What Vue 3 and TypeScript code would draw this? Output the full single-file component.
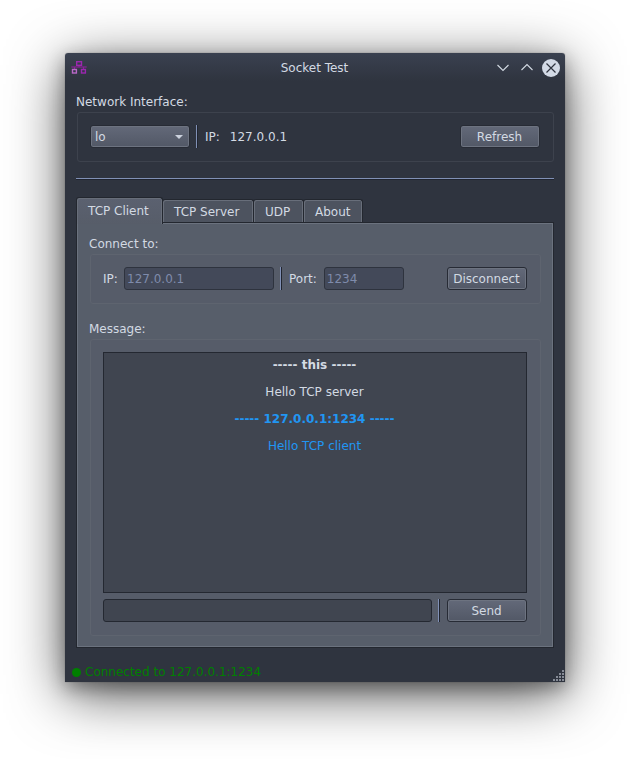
<script setup lang="ts">
import { ref } from 'vue'

interface LogLine {
  text: string
  kind: 'own' | 'peer'
  bold: boolean
}

interface Tab {
  title: string
  width: number
}

const tabs: Tab[] = [
  { title: 'TCP Client', width: 87 },
  { title: 'TCP Server', width: 92 },
  { title: 'UDP', width: 51 },
  { title: 'About', width: 60 },
]
const activeTab = ref(0)
const draft = ref('')

const log: LogLine[] = [
  { text: '----- this -----', kind: 'own', bold: true },
  { text: 'Hello TCP server', kind: 'own', bold: false },
  { text: '----- 127.0.0.1:1234 -----', kind: 'peer', bold: true },
  { text: 'Hello TCP client', kind: 'peer', bold: false },
]

const gripDots = [
  [9, 0],
  [6, 3], [9, 3],
  [3, 6], [6, 6], [9, 6],
  [0, 9], [3, 9], [6, 9], [9, 9],
]
</script>

<template>
  <div class="desktop">
    <div class="window">
      <header class="titlebar">
        <svg class="app-icon" width="16" height="13" viewBox="0 0 16 13" fill="none">
          <path d="M.3 6H15.7" stroke="#8a2399" stroke-width="1.2" />
          <path d="M8 4.5V6M3.5 6V8.5M12.5 6V8.5" stroke="#8a2399" stroke-width="1.2" />
          <rect x="5.7" y=".7" width="4.8" height="3.6" stroke="#9c27b0" stroke-width="1.4" />
          <rect x="1.5" y="8.5" width="3.9" height="3.5" stroke="#ba68c8" stroke-width="1.4" />
          <rect x="10.5" y="8.5" width="3.9" height="3.5" stroke="#9c27b0" stroke-width="1.4" />
        </svg>
        <span class="title">Socket Test</span>
        <div class="controls">
          <svg width="12" height="18" viewBox="0 0 12 18" fill="none" stroke="#d3dae3" stroke-width="1.1">
            <path d="M.5 6L6 11.5L11.5 6" />
          </svg>
          <svg width="12" height="18" viewBox="0 0 12 18" fill="none" stroke="#d3dae3" stroke-width="1.1">
            <path d="M.5 11L6 5.5L11.5 11" />
          </svg>
          <svg class="close" width="18" height="18" viewBox="0 0 18 18" fill="none">
            <circle cx="9" cy="9" r="9" fill="#d3dae6" />
            <path d="M4.5 4.5L13.5 13.5M13.5 4.5L4.5 13.5" stroke="#2f343f" stroke-width="1.2" />
          </svg>
        </div>
      </header>

      <main class="body">
        <div class="label">Network Interface:</div>
        <section class="group net">
          <div class="button combo">
            <span>lo</span>
            <svg width="8" height="4" viewBox="0 0 8 4"><path d="M0 0H8L4 4Z" fill="#ccd2de" /></svg>
          </div>
          <i class="vline"></i>
          <span class="caption">IP:</span>
          <span class="address">127.0.0.1</span>
          <button class="button push">Refresh</button>
        </section>

        <hr class="rule" />

        <nav class="tabs">
          <div
            v-for="(tab, i) in tabs"
            :key="tab.title"
            class="tab"
            :class="{ active: i === activeTab }"
            :style="{ width: tab.width + 'px' }"
            @click="activeTab = i"
          >{{ tab.title }}</div>
        </nav>

        <section class="pane">
          <div class="label">Connect to:</div>
          <div class="group connect">
            <span class="ip-label">IP:</span>
            <div class="field disabled ip">127.0.0.1</div>
            <i class="vline"></i>
            <span class="caption">Port:</span>
            <div class="field disabled port">1234</div>
            <button class="button push">Disconnect</button>
          </div>

          <div class="label message-label">Message:</div>
          <div class="group message">
            <div class="log">
              <p v-for="line in log" :key="line.text" :class="[line.kind, { bold: line.bold }]">{{ line.text }}</p>
            </div>
            <div class="compose">
              <input v-model="draft" class="field draft" type="text" />
              <i class="vline"></i>
              <button class="button push">Send</button>
            </div>
          </div>
        </section>
      </main>

      <footer class="status">
        <i class="dot"></i>
        <span>Connected to 127.0.0.1:1234</span>
        <svg class="grip" width="12" height="12" viewBox="0 0 12 12">
          <rect v-for="([x, y], i) in gripDots" :key="i" :x="x" :y="y" width="2" height="2" fill="#868b96" />
        </svg>
      </footer>
    </div>
  </div>
</template>

<style>
body {
  margin: 0;
  background: #fff;
}
</style>

<style scoped>
* {
  box-sizing: border-box;
}

.desktop {
  width: 630px;
  height: 759px;
  padding: 53px 65px 0;
  overflow: hidden;
  background: #fff;
  font: 12px/14px "DejaVu Sans", sans-serif;
  color: #d3dae3;
}

.window {
  display: flex;
  flex-direction: column;
  height: 629px;
  border-radius: 3px 3px 0 0;
  background: linear-gradient(#3a4150, #2f343f 28px);
  box-shadow: 0 0 1px rgba(0, 0, 0, 0.5), 0 12px 56px rgba(0, 0, 0, 0.68), 0 6px 18px rgba(0, 0, 0, 0.32);
}

.titlebar {
  display: grid;
  grid-template-columns: 80px 1fr 80px;
  align-items: center;
  height: 29px;
  padding: 0 5px 0 6px;
}

.title {
  padding-right: 2px;
  text-align: center;
}

.controls {
  display: flex;
  justify-content: flex-end;
  align-items: center;
  gap: 12px;
}

.controls .close {
  margin-left: -3px;
}

.body {
  display: flex;
  flex-direction: column;
  flex: 1;
  padding: 13px 11px 0;
}

.label {
  height: 17px;
}

.group {
  display: flex;
  border: 1px solid #3d424d;
  border-radius: 3px;
}

.net {
  width: 477px;
  height: 50px;
  margin-left: 1px;
  padding: 12px 13px 0 12px;
  align-items: flex-start;
  line-height: 25px;
}

.button {
  height: 23px;
  border: 1px solid #272b35;
  border-radius: 3px;
  background: linear-gradient(#636979, #525866);
  box-shadow: inset 0 0 0 1px #6d7380;
  color: #d3dae3;
  font: inherit;
  line-height: 19px;
}

.push {
  width: 80px;
  margin-left: auto;
  padding: 2px 1px 0 0;
  text-align: center;
}

.combo {
  display: flex;
  align-items: center;
  justify-content: space-between;
  width: 100px;
  padding: 1px 6px 0 4px;
}

.combo span {
  padding-top: 1px;
}

.vline {
  width: 2px;
  height: 23px;
  margin: 0 7px 0 6px;
  border-left: 1px solid #8090b5;
  border-right: 1px solid #20242f;
}

.address {
  margin-left: 10px;
}

.rule {
  width: 478px;
  height: 2px;
  margin: 16px 0 17px;
  border: 0;
  border-top: 1px solid #8090b5;
  border-bottom: 1px solid #20242f;
}

.tabs {
  display: flex;
  align-items: flex-end;
  height: 25px;
  z-index: 1;
}

.tab {
  height: 23px;
  margin-left: -1px;
  padding: 0 0 0 11px;
  border: 1px solid #23272f;
  border-bottom: 0;
  border-radius: 3px 3px 0 0;
  background: #4d535f;
  box-shadow: inset 1px 1px #686e7a, inset -1px 0 #686e7a;
  line-height: 24px;
  white-space: nowrap;
}

.tab.active {
  height: 27px;
  margin: 0 0 -2px;
  background: linear-gradient(#5b6170, #575d69);
  line-height: 26px;
}

.pane {
  display: flex;
  flex-direction: column;
  height: 426px;
  padding: 14px 12px 0;
  border: 1px solid #23272f;
  box-shadow: inset 0 0 0 1px #6b727e;
  background: #575e6a;
}

.pane .group {
  width: 451px;
  margin-left: 1px;
  border-color: #5e646f;
  background: #565c69;
}

.connect {
  height: 50px;
  padding: 12px 13px 0 12px;
  line-height: 24px;
}

.field {
  height: 23px;
  padding: 0 2px;
  border: 1px solid #242831;
  border-radius: 3px;
  background: #404550;
  color: #d3dae3;
  font: inherit;
  line-height: 22px;
}

.field.disabled {
  border-color: #2e333e;
  background: #434959;
  color: #7f8bab;
}

.ip-label {
  width: 21px;
}

.ip {
  width: 150px;
}

.port {
  width: 80px;
  margin-left: 7px;
}

.message-label {
  margin-top: 18px;
}

.message {
  flex-direction: column;
  height: 297px;
  padding: 12px 13px 0 12px;
}

.log {
  height: 241px;
  padding: 5px 1px 5px 0;
  border: 1px solid #242831;
  background: #404550;
  text-align: center;
}

.log p {
  margin: 0 0 13px;
}

.log .bold {
  font-weight: bold;
}

.log .peer {
  color: #2196f3;
}

.compose {
  display: flex;
  margin-top: 6px;
}

.draft {
  width: 329px;
  outline: 0;
}

.status {
  display: flex;
  align-items: center;
  height: 21px;
  padding-left: 6.5px;
  color: green;
}

.dot {
  width: 9.5px;
  height: 9.5px;
  margin: 2px 4px 0 0;
  border-radius: 50%;
  background: green;
}

.grip {
  align-self: flex-end;
  margin-left: auto;
}
</style>
